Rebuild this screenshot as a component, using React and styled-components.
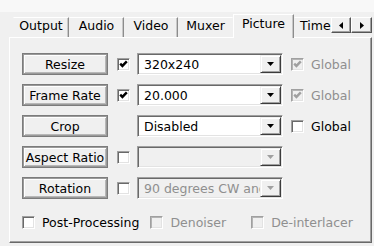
import React from 'react';
import styled, { createGlobalStyle } from 'styled-components';

const GlobalStyle = createGlobalStyle`
  html, body { margin: 0; padding: 0; }
  body {
    background: #f0f0f0;
    font-family: "DejaVu Sans", Verdana, sans-serif;
    font-size: 12.5px;
    color: #000;
  }
`;

const Window = styled.div`
  width: 374px;
  height: 246px;
  box-sizing: border-box;
  padding-top: 14px;
  overflow: hidden;
  background: linear-gradient(#f8f8f8 0 12px, #f0f0f0 12px);
`;

const TabStrip = styled.div`
  display: flex;
  align-items: flex-end;
  height: 24px;
  margin-left: 13px;
  position: relative;
  z-index: 1;
`;

const TabList = styled.div`
  display: flex;
  align-items: flex-end;
  width: 318px;
  height: 100%;
  overflow: hidden;
  flex: none;
`;

const Tab = styled.div`
  flex: none;
  box-sizing: border-box;
  width: ${(p) => p.$w}px;
  height: ${(p) => (p.$active ? 24 : 20)}px;
  margin-bottom: ${(p) => (p.$active ? 0 : 1)}px;
  padding-top: ${(p) => (p.$active ? 1 : 0)}px;
  padding-left: ${(p) => p.$pl || 0}px;
  line-height: 16px;
  text-align: ${(p) => (p.$pl ? 'left' : 'center')};
  white-space: nowrap;
  background: #f0f0f0;
  border-top: 1px solid #fff;
  border-left: 1px solid ${(p) => (p.$active ? '#fff' : 'transparent')};
  border-right: 1px solid ${(p) => (p.$sep ? '#8c8c8c' : 'transparent')};
  box-shadow: ${(p) => (p.$sep ? 'inset -1px 0 0 #c8c8c8' : 'none')};
  color: #000;
`;

const ScrollButtons = styled.div`
  display: flex;
  align-self: flex-start;
  margin-top: 3px;
`;

const ScrollButton = styled.div`
  box-sizing: border-box;
  width: ${(p) => p.$w}px;
  height: 16px;
  display: flex;
  align-items: center;
  justify-content: center;
  background: #f0f0f0;
  border-top: 1px solid #fff;
  border-left: 1px solid #fff;
  border-right: 1px solid #555;
  border-bottom: 1px solid #555;
  box-shadow: inset -1px -1px 0 #a0a0a0;
`;

const Panel = styled.div`
  box-sizing: border-box;
  margin-top: -1px;
  margin-left: 9px;
  width: 363px;
  height: 206px;
  background: #f0f0f0;
  border-top: 1px solid #fff;
  border-left: 1px solid #fff;
  border-right: 1px solid #696969;
  border-bottom: 1px solid #696969;
  box-shadow: inset -1px -1px 0 #a0a0a0;
  padding: 15px 0 0 12px;
  display: flex;
  flex-direction: column;
  gap: 9px;
`;

const Row = styled.div`
  display: flex;
  align-items: center;
  height: 22px;
`;

const PostRow = styled(Row)`
  margin-top: 3px;
`;

const PushButton = styled.div`
  flex: none;
  box-sizing: border-box;
  width: 86px;
  height: 22px;
  margin-right: 9px;
  display: flex;
  align-items: center;
  justify-content: center;
  white-space: nowrap;
  background: #f0f0f0;
  border: 1px solid #7c7c7c;
  box-shadow: inset 0 0 0 1px #9a9a9a, inset 2px 2px 0 #fff, inset -2px -2px 0 #b8b8b8;
`;

const CheckBoxBox = styled.div`
  flex: none;
  box-sizing: border-box;
  width: 13px;
  height: 13px;
  display: flex;
  align-items: center;
  justify-content: center;
  background: ${(p) => (p.$disabled ? '#f0f0f0' : '#fff')};
  border-top: 1px solid #a0a0a0;
  border-left: 1px solid #a0a0a0;
  border-right: 1px solid #fff;
  border-bottom: 1px solid #fff;
  box-shadow: inset 1px 1px 0 ${(p) => (p.$disabled ? '#b4b4b4' : '#696969')},
    inset -1px -1px 0 #e3e3e3;
`;

const Slot = styled.div`
  flex: none;
  width: 13px;
  height: 13px;
  margin-right: ${(p) => p.$mr || 0}px;
`;

const CheckWrap = styled.div`
  display: flex;
  align-items: center;
  flex: none;
  margin-right: ${(p) => p.$mr || 0}px;
`;

const Label = styled.span`
  margin-left: 7px;
  white-space: nowrap;
  color: ${(p) => (p.$disabled ? '#8f8f8f' : '#000')};
`;

const Combo = styled.div`
  flex: none;
  box-sizing: border-box;
  width: 146px;
  height: 22px;
  margin-right: 8px;
  display: flex;
  align-items: stretch;
  background: ${(p) => (p.$disabled ? '#f0f0f0' : '#fff')};
  border-top: 1px solid #a0a0a0;
  border-left: 1px solid #a0a0a0;
  border-right: 1px solid #fff;
  border-bottom: 1px solid #fff;
  box-shadow: inset 1px 1px 0 #696969, inset -1px -1px 0 #e3e3e3;
  padding: 1px;
  overflow: hidden;
`;

const ComboText = styled.div`
  flex: 1;
  min-width: 0;
  overflow: hidden;
  white-space: nowrap;
  padding-left: 5px;
  display: flex;
  align-items: center;
  color: ${(p) => (p.$disabled ? '#8f8f8f' : '#000')};
`;

const DropButton = styled.div`
  flex: none;
  box-sizing: border-box;
  width: 21px;
  display: flex;
  align-items: center;
  justify-content: center;
  background: #f0f0f0;
  border-top: 1px solid #f0f0f0;
  border-left: 1px solid #f0f0f0;
  border-right: 1px solid #3c3c3c;
  border-bottom: 1px solid #3c3c3c;
  box-shadow: inset 1px 1px 0 #fff, inset -1px -1px 0 #a0a0a0;
`;

const CheckMark = ({ color }) => (
  <svg width="9" height="9" viewBox="0 0 9 9">
    <polyline points="1.2,3.6 3.4,5.9 7.8,1.3" fill="none" stroke={color} strokeWidth="2.4" />
  </svg>
);

const CheckBox = ({ checked, disabled, label, mr }) => (
  <CheckWrap $mr={mr}>
    <CheckBoxBox $disabled={disabled}>
      {checked && <CheckMark color={disabled ? '#a0a0a0' : '#000'} />}
    </CheckBoxBox>
    {label && <Label $disabled={disabled}>{label}</Label>}
  </CheckWrap>
);

const DownArrow = ({ color }) => (
  <svg width="7" height="4" viewBox="0 0 7 4">
    <polygon points="0,0 7,0 3.5,4" fill={color} />
  </svg>
);

const SideArrow = ({ dir }) => (
  <svg width="4" height="7" viewBox="0 0 4 7">
    <polygon points={dir === 'left' ? '4,0 4,7 0,3.5' : '0,0 0,7 4,3.5'} fill="#000" />
  </svg>
);

const ComboBox = ({ value, disabled }) => (
  <Combo $disabled={disabled}>
    <ComboText $disabled={disabled}>{value}</ComboText>
    <DropButton>
      <DownArrow color={disabled ? '#a0a0a0' : '#000'} />
    </DropButton>
  </Combo>
);

const tabs = [
  { label: 'Output', w: 56, sep: true },
  { label: 'Audio', w: 55, sep: true },
  { label: 'Video', w: 54, sep: true },
  { label: 'Muxer', w: 55, sep: false },
  { label: 'Picture', w: 61, sep: true, active: true },
  { label: 'Time', w: 40, sep: false, pl: 5 },
];

const rows = [
  { btn: 'Resize', check: { checked: true }, value: '320x240', global: { checked: true, disabled: true } },
  { btn: 'Frame Rate', check: { checked: true }, value: '20.000', global: { checked: true, disabled: true } },
  { btn: 'Crop', check: null, value: 'Disabled', global: { checked: false, disabled: false } },
  { btn: 'Aspect Ratio', check: { checked: false }, value: '', disabled: true },
  { btn: 'Rotation', check: { checked: false }, value: '90 degrees CW and', disabled: true },
];

export default function App() {
  return (
    <>
      <GlobalStyle />
      <Window>
        <TabStrip>
          <TabList>
            {tabs.map((t) => (
              <Tab key={t.label} $w={t.w} $sep={t.sep} $active={t.active} $pl={t.pl}>
                {t.label}
              </Tab>
            ))}
          </TabList>
          <ScrollButtons>
            <ScrollButton $w={20}>
              <SideArrow dir="left" />
            </ScrollButton>
            <ScrollButton $w={21}>
              <SideArrow dir="right" />
            </ScrollButton>
          </ScrollButtons>
        </TabStrip>
        <Panel>
          {rows.map((r) => (
            <Row key={r.btn}>
              <PushButton>{r.btn}</PushButton>
              {r.check ? <CheckBox checked={r.check.checked} mr={7} /> : <Slot $mr={7} />}
              <ComboBox value={r.value} disabled={r.disabled} />
              {r.global && (
                <CheckBox checked={r.global.checked} disabled={r.global.disabled} label="Global" />
              )}
            </Row>
          ))}
          <PostRow>
            <CheckBox label="Post-Processing" mr={11} />
            <CheckBox label="Denoiser" disabled mr={25} />
            <CheckBox label="De-interlacer" disabled />
          </PostRow>
        </Panel>
      </Window>
    </>
  );
}
